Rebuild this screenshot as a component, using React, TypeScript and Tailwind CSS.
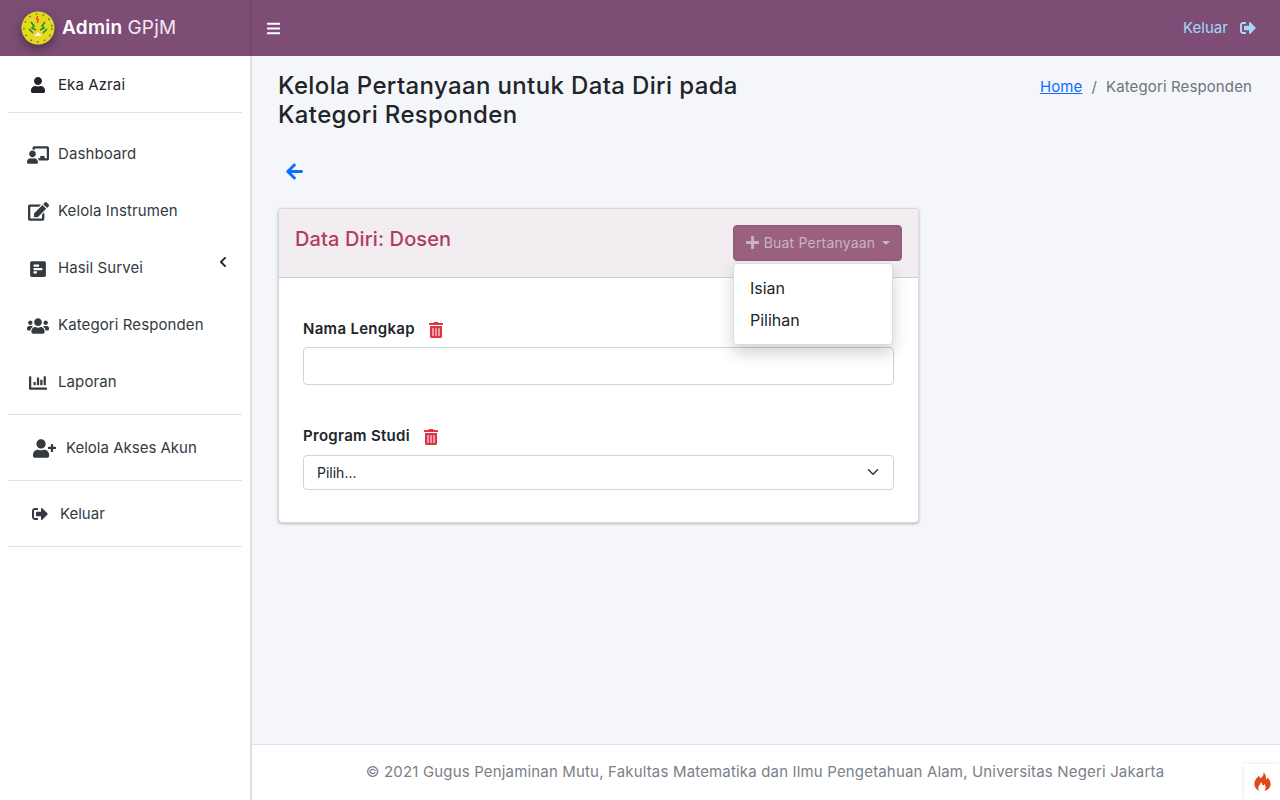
import { FaBars, FaUser, FaChalkboardTeacher, FaEdit, FaPollH, FaUsers, FaChartBar, FaUserPlus, FaSignOutAlt, FaChevronLeft, FaArrowLeft, FaPlus, FaTrashAlt } from "react-icons/fa";

function Logo() {
    return (
        <svg viewBox="0 0 34 34" className="w-[34px] h-[34px] rounded-full shadow-[0_4px_10px_rgba(0,0,0,0.35)]">
            <circle cx="17" cy="17" r="16.5" fill="#e6d91c" />
            <circle cx="17" cy="17" r="14" fill="none" stroke="#1f8a3c" strokeWidth="1.2" strokeDasharray="2 5" />
            <path d="M17 5l-1.5 3 2 1-1.5 3" fill="none" stroke="#d8342a" strokeWidth="1.2" />
            <path d="M10 11l3 4-2 2 4 2M24 11l-3 4 2 2-4 2M8 18l4 4M26 18l-4 4" fill="none" stroke="#1f8a3c" strokeWidth="1.6" />
            <path d="M13 25l4-4 4 4z" fill="#f3f3f3" />
        </svg>
    );
}

function Flame() {
    return (
        <svg viewBox="0 0 18 22" className="w-[17px] h-[20px]">
            <path d="M10 0c1 3-1 5-3 7C5 5 5 4 5 4 2 7 0 10 0 13c0 4 3 7 6 8-2-2-2-4-1-6 1-1 2-2 2-4 2 1 1 3 3 4 1-1 1-2 1-2 2 3 2 6 0 8 4-1 7-4 7-8 0-3-2-5-3-7-1 1-1 2-2 2 0-3-1-6-3-8z" fill="#dd4814" />
        </svg>
    );
}

function SideItem({ icon, label }: { icon: React.ReactNode, label: string }) {
    return (
        <div className="h-[57px] flex items-center pl-[18px]">
            <span className="flex justify-center w-6 mr-2 text-[#343a40]">{icon}</span>
            <span className="text-[15px] tracking-[0.1px] text-[#343a40]">{label}</span>
        </div>
    );
}

function FieldLabel({ label }: { label: string }) {
    return (
        <div className="h-[21px] flex items-center gap-[13px] text-[15px] tracking-[0.3px] font-semibold text-[#212529]">
            {label} <FaTrashAlt className="text-[16px] text-[#dc3545]" />
        </div>
    );
}

export default function App() {
    return (
        <div className="h-[800px] flex flex-col overflow-hidden bg-[#f4f6f9] text-[#212529] font-['Inter','Liberation_Sans',sans-serif]">
            <header className="h-14 shrink-0 flex items-center bg-[#7d4d75] text-white">
                <div className="w-[251px] h-full flex items-center pl-[21px] gap-[7px] border-r border-[#6f4468]">
                    <Logo />
                    <span className="text-[19px] tracking-[0.25px] font-semibold">Admin <span className="font-normal text-[#f1e9f0]">GPjM</span></span>
                </div>
                <FaBars className="ml-[15px] text-[15px]" />
                <div className="ml-auto pr-6 flex items-center gap-3 text-[#a5d8f7] text-[15px] tracking-[0.05px]">
                    Keluar <FaSignOutAlt className="text-[16px]" />
                </div>
            </header>
            <div className="flex-1 flex min-h-0">
                <aside className="w-[252px] shrink-0 bg-white px-2 border-r-2 border-[#dfe1e8]">
                    <div className="h-[57px] flex items-center pl-[22px] pt-[2px] border-b border-[#dee2e6]">
                        <FaUser className="text-[#212529] text-[16px] mr-[12px]" />
                        <span className="text-[15px] tracking-[0.1px] text-[#212529]">Eka Azrai</span>
                    </div>
                    <div className="relative pt-[13px] pb-[3px] border-b border-[#dee2e6]">
                        <SideItem icon={<FaChalkboardTeacher className="text-[22px]" />} label="Dashboard" />
                        <SideItem icon={<FaEdit className="text-[21px]" />} label="Kelola Instrumen" />
                        <SideItem icon={<FaPollH className="text-[18px]" />} label="Hasil Survei" />
                        <FaChevronLeft className="absolute left-[209px] top-[143px] text-[12px] text-[#212529]" />
                        <SideItem icon={<FaUsers className="text-[22px]" />} label="Kategori Responden" />
                        <SideItem icon={<FaChartBar className="text-[18px]" />} label="Laporan" />
                    </div>
                    <div className="h-[66px] flex items-center pl-[25px] pt-[1px] border-b border-[#dee2e6]">
                        <FaUserPlus className="text-[#343a40] text-[23px] mr-[10px]" />
                        <span className="text-[15px] text-[#343a40]">Kelola Akses Akun</span>
                    </div>
                    <div className="h-[66px] flex items-center pl-6 pt-[1px] border-b border-[#dee2e6]">
                        <FaSignOutAlt className="text-[#343a40] text-[16px] mr-[12px]" />
                        <span className="text-[15px] text-[#343a40]">Keluar</span>
                    </div>
                </aside>
                <main className="flex-1 min-w-0 flex flex-col">
                    <div className="flex-1 pl-[26px] pr-[28px] pt-[15px]">
                        <div className="flex justify-between items-start">
                            <h1 className="w-[486px] text-[24px] leading-[29px] tracking-[0.36px] font-medium text-[#212529]">Kelola Pertanyaan untuk Data Diri pada Kategori Responden</h1>
                            <div className="pt-[5px] flex gap-[9px] text-[15px] tracking-[0.12px] text-[#6c757d]">
                                <span className="text-[#0d6efd] underline">Home</span>
                                <span>/</span>
                                <span>Kategori Responden</span>
                            </div>
                        </div>
                        <FaArrowLeft className="mt-[33px] ml-[7px] text-[19px] text-[#0d6efd]" />
                        <div className="mt-[27px] w-[641px] bg-white rounded border border-[#d8d8dc] shadow-[0_1px_3px_rgba(0,0,0,0.25)]">
                            <div className="h-[69px] bg-[#f1edf1] border-b border-[#d5cfd5] rounded-t flex justify-between px-4 pt-4 relative">
                                <h2 className="text-[20px] leading-[28px] tracking-[0.12px] font-medium text-[#b03c5e]">Data Diri: Dosen</h2>
                                <div className="w-[169px] h-[36px] pb-[1px] bg-[#9a617e] border border-[#8e5a78] rounded flex items-center justify-center gap-[4px] text-[14px] tracking-[0.2px] text-[#c9b4c2]">
                                    <FaPlus className="text-[15px]" />
                                    Buat Pertanyaan
                                    <span className="ml-[3px] border-x-[4px] border-x-transparent border-t-[4px] border-t-[#c9b4c2]" />
                                </div>
                                <div className="absolute left-[454px] top-[54px] z-10 w-[160px] h-[82px] pt-2 bg-white border border-[#dcdcdc] rounded shadow-[0_8px_16px_rgba(0,0,0,0.18)] text-[16px] text-[#212529]">
                                    <div className="h-8 flex items-center pl-4">Isian</div>
                                    <div className="h-8 flex items-center pl-4">Pilihan</div>
                                </div>
                            </div>
                            <div className="px-6 pt-[41px] pb-[32px]">
                                <FieldLabel label="Nama Lengkap" />
                                <div className="mt-[7px] h-[38px] bg-white border border-[#ced4da] rounded" />
                                <div className="mt-[41px]">
                                    <FieldLabel label="Program Studi" />
                                </div>
                                <div className="mt-[8px] h-[35px] pl-[13px] pr-3 pb-[1px] flex items-center justify-between bg-white border border-[#ced4da] rounded text-[14px] text-[#212529]">
                                    Pilih...
                                    <svg viewBox="0 0 16 16" className="w-4 h-3">
                                        <path d="M2 5l6 6 6-6" fill="none" stroke="#343a40" strokeWidth="2" strokeLinecap="round" strokeLinejoin="round" />
                                    </svg>
                                </div>
                            </div>
                        </div>
                    </div>
                    <footer className="h-14 shrink-0 pr-[2px] flex items-center justify-center bg-white border-t border-[#dee2e6] text-[15px] tracking-[0.165px] text-[#7a8088]">
                        © 2021 Gugus Penjaminan Mutu, Fakultas Matematika dan Ilmu Pengetahuan Alam, Universitas Negeri Jakarta
                    </footer>
                </main>
            </div>
            <div className="fixed right-0 bottom-0 w-9 h-9 bg-white flex items-center justify-center shadow-[0_0_4px_rgba(0,0,0,0.12)]">
                <Flame />
            </div>
        </div>
    );
}
